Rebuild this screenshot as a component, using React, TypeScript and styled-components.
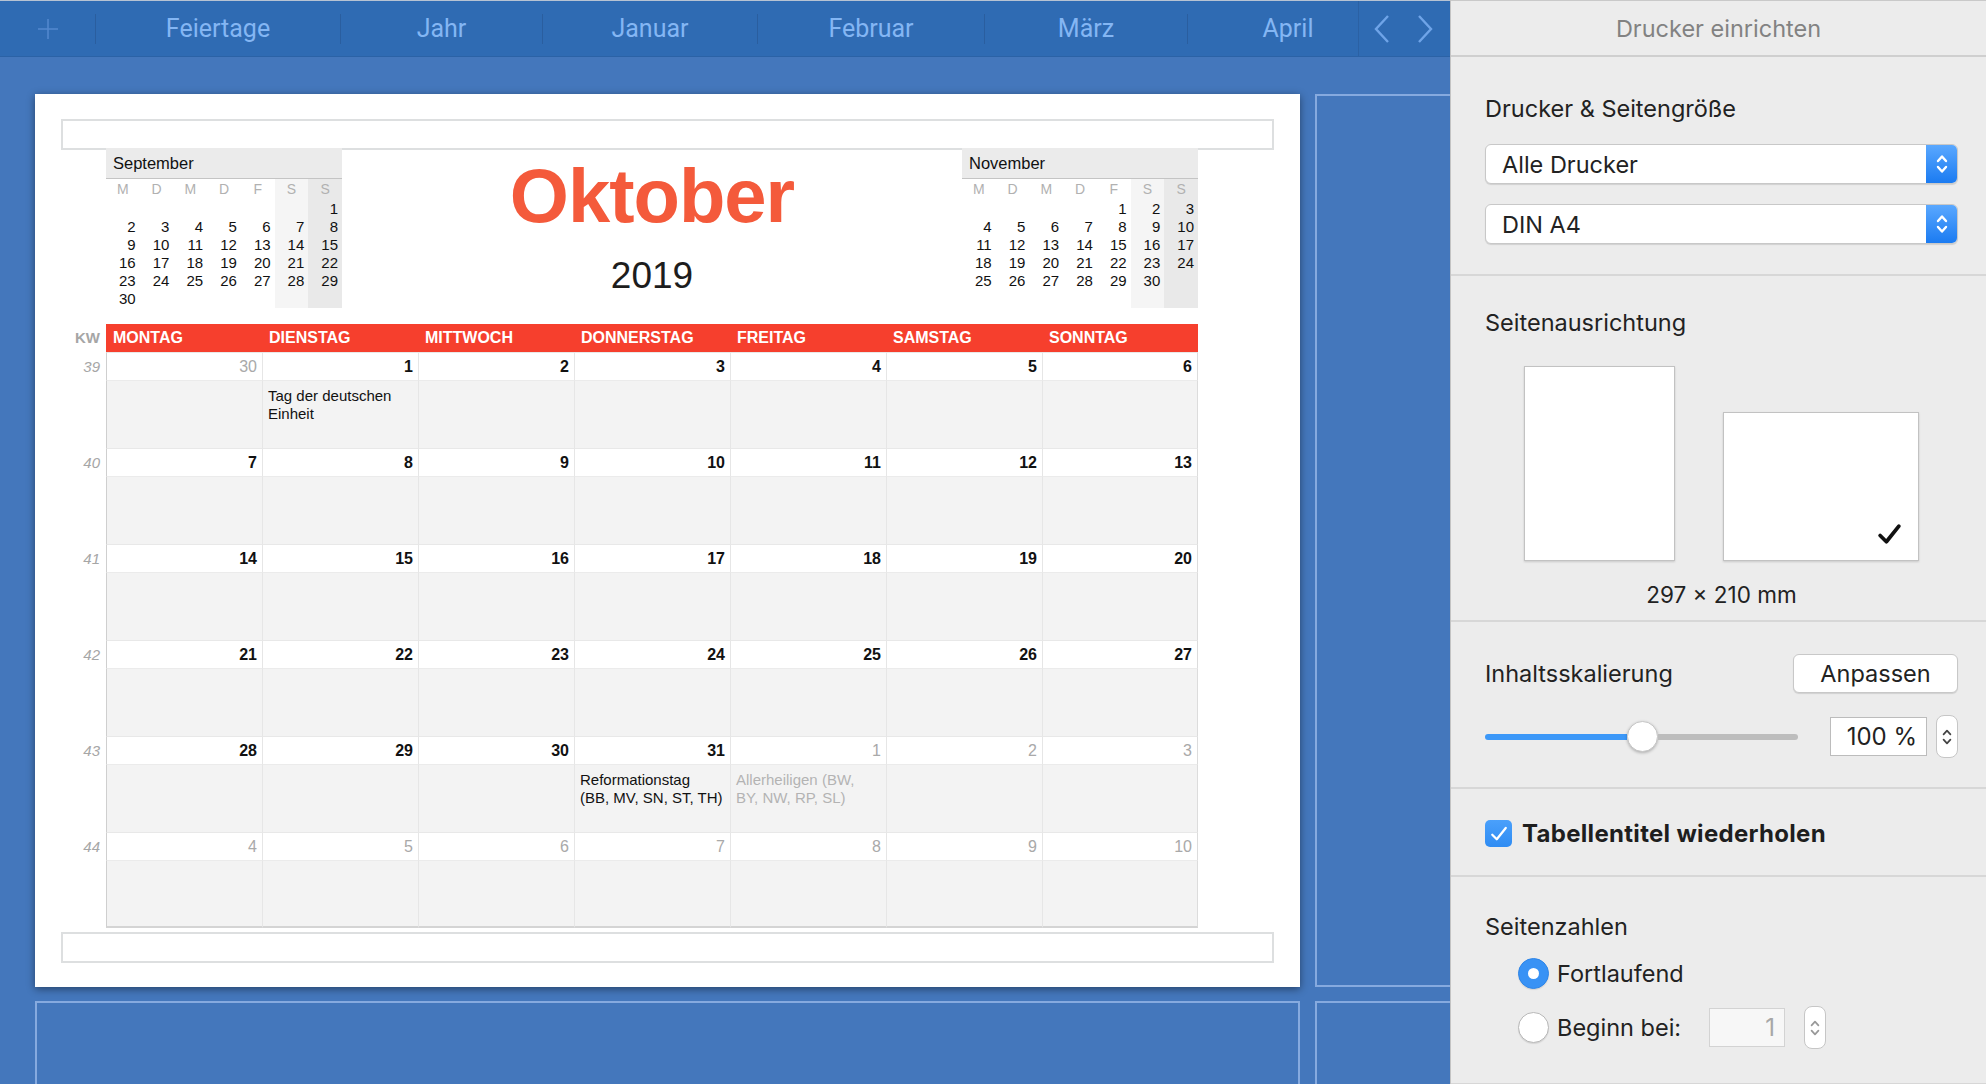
import React from "react";
import styled, { createGlobalStyle } from "styled-components";

const GlobalStyle = createGlobalStyle`
  html, body {
    margin: 0;
    padding: 0;
  }
  body {
    width: 1986px;
    height: 1084px;
    overflow: hidden;
    background: #4477bc;
    font-family: "Liberation Sans", Arial, sans-serif;
  }
  * {
    box-sizing: border-box;
  }
`;

const Shell = styled.div`
  display: flex;
  width: 1986px;
  height: 1084px;
`;

/* ---------- workspace / toolbar ---------- */

const Workspace = styled.div`
  width: 1450px;
  display: flex;
  flex-direction: column;
  overflow: hidden;
`;

const Toolbar = styled.div`
  height: 57px;
  flex: none;
  display: flex;
  background: #2f6bb3;
  border-top: 1px solid #b7c3d3;
  border-bottom: 1px solid #2b62a6;
`;

const TabStrip = styled.div`
  flex: 1;
  display: flex;
  align-items: center;
  overflow: hidden;
`;

const PlusCell = styled.div`
  width: 95px;
  flex: none;
  display: flex;
  justify-content: center;
  align-items: center;
`;

const Tab = styled.div<{ $w: number }>`
  width: ${(p) => p.$w}px;
  flex: none;
  text-align: center;
  font-family: Roboto, "Liberation Sans", sans-serif;
  font-size: 25px;
  color: #84b6f3;
`;

const Divider = styled.div`
  width: 1px;
  height: 30px;
  flex: none;
  background: #2a5e9f;
`;

const NavBox = styled.div`
  width: 92px;
  flex: none;
  display: flex;
  align-items: center;
  justify-content: space-around;
  border-left: 1px solid #2b61a4;
  padding: 0 4px 0 2px;
`;

const Canvas = styled.div`
  flex: 1;
  overflow: hidden;
  background: #4477bc;
  padding: 37px 0 0 35px;
  display: grid;
  grid-template-columns: repeat(2, 1265px);
  grid-auto-rows: 893px;
  gap: 14px 15px;
`;

const Sheet = styled.div`
  background: #fff;
  box-shadow: 0 2px 8px rgba(0, 0, 0, 0.45);
  padding: 25px 26px 24px;
  display: flex;
  flex-direction: column;
`;

const GhostSheet = styled.div`
  border: 2px solid #86aadf;
`;

const MarginBox = styled.div<{ $top?: number }>`
  height: 31px;
  flex: none;
  border: 2px solid #dddfe0;
  margin-top: ${(p) => p.$top ?? 0}px;
`;

/* ---------- calendar ---------- */

const CalendarArea = styled.div`
  width: 1137px;
  margin-top: -2px;
  display: flex;
  flex-direction: column;
`;

const TopBlock = styled.div`
  margin-left: 45px;
  height: 176px;
  display: flex;
  align-items: flex-start;
`;

const MiniCal = styled.div`
  width: 236px;
  flex: none;
`;

const MiniHead = styled.div`
  height: 31px;
  background: #ebebeb;
  border-bottom: 1px solid #c4c4c4;
  padding-left: 7px;
  font-size: 16.5px;
  line-height: 31px;
  color: #111;
`;

const MiniGrid = styled.div`
  display: grid;
  grid-template-columns: repeat(7, 1fr);
  grid-template-rows: 21px repeat(6, 18px);
  background: linear-gradient(
    to right,
    transparent 0,
    transparent 71.43%,
    #f5f5f5 71.43%,
    #f5f5f5 85.71%,
    #e9e9e9 85.71%,
    #e9e9e9 100%
  );
`;

const MiniDow = styled.div`
  text-align: center;
  font-size: 14px;
  line-height: 21px;
  color: #b1b1b1;
`;

const MiniDay = styled.div`
  text-align: right;
  padding-right: 4px;
  font-size: 15px;
  line-height: 18px;
  color: #111;
`;

const TitleBlock = styled.div`
  flex: 1;
  display: flex;
  flex-direction: column;
  align-items: center;
`;

const MonthTitle = styled.div`
  margin-top: 10px;
  font-size: 76px;
  line-height: 76px;
  font-weight: 700;
  letter-spacing: -1px;
  color: #f45a3b;
`;

const YearTitle = styled.div`
  margin-top: 23px;
  font-size: 37px;
  line-height: 37px;
  color: #1d1d1d;
`;

const CalRow = styled.div<{ $head?: boolean }>`
  display: grid;
  grid-template-columns: 45px repeat(7, 156px);
  grid-template-rows: ${(p) => (p.$head ? "28px" : "28px 68px")};
`;

const KwLabel = styled.div<{ $italic?: boolean }>`
  text-align: right;
  padding-right: 6px;
  font-size: 15px;
  line-height: ${(p) => (p.$italic ? "30px" : "28px")};
  color: #a6a6a6;
  font-weight: ${(p) => (p.$italic ? 400 : 700)};
  font-style: ${(p) => (p.$italic ? "italic" : "normal")};
`;

const DayName = styled.div`
  background: #f63f2d;
  color: #fff;
  font-weight: 700;
  font-size: 16px;
  line-height: 28px;
  padding-left: 7px;
`;

const DateCell = styled.div<{ $first?: boolean; $last?: boolean; $muted?: boolean }>`
  background: #fff;
  border-left: 1px solid ${(p) => (p.$first ? "#cfcfcf" : "#e6e6e6")};
  border-right: ${(p) => (p.$last ? "1px solid #dcdcdc" : "none")};
  border-top: 1px solid #e8e8e8;
  text-align: right;
  padding-right: 5px;
  font-size: 16px;
  line-height: 28px;
  font-weight: ${(p) => (p.$muted ? 400 : 700)};
  color: ${(p) => (p.$muted ? "#a9a9a9" : "#111")};
`;

const NoteCell = styled.div<{ $first?: boolean; $last?: boolean; $muted?: boolean; $bottom?: boolean }>`
  background: #f3f3f3;
  border-left: 1px solid ${(p) => (p.$first ? "#cfcfcf" : "#e6e6e6")};
  border-right: ${(p) => (p.$last ? "1px solid #dcdcdc" : "none")};
  border-top: 1px solid #ebebeb;
  border-bottom: ${(p) => (p.$bottom ? "2px solid #d4d4d4" : "none")};
  padding: 6px 0 0 5px;
  font-size: 15px;
  line-height: 18px;
  white-space: nowrap;
  color: ${(p) => (p.$muted ? "#b3b3b3" : "#111")};
`;

/* ---------- sidebar ---------- */

const Sidebar = styled.div`
  width: 536px;
  flex: none;
  background: #ececec;
  border-left: 1px solid #c3c3c3;
  border-top: 1px solid #c9c9c9;
  display: flex;
  flex-direction: column;
  font-family: Inter, "Noto Sans", sans-serif;
  color: #222;
`;

const SideHeader = styled.div`
  height: 56px;
  flex: none;
  display: flex;
  align-items: center;
  justify-content: center;
  font-size: 23.5px;
  color: #828282;
  border-bottom: 2px solid #cfcfcf;
`;

const Section = styled.div<{ $pt: number; $pb: number }>`
  padding: ${(p) => p.$pt}px 28px ${(p) => p.$pb}px 34px;
  border-bottom: 2px solid #d7d7d7;
  display: flex;
  flex-direction: column;
`;

const SectionTitle = styled.div`
  font-size: 23.5px;
  line-height: 28px;
`;

const Select = styled.div<{ $mt: number }>`
  margin-top: ${(p) => p.$mt}px;
  height: 40px;
  background: #fff;
  border: 1px solid #c8c8c8;
  border-radius: 6px;
  box-shadow: 0 1px 1px rgba(0, 0, 0, 0.12);
  display: flex;
  align-items: center;
  padding-left: 16px;
  font-size: 23.5px;
  overflow: hidden;
`;

const SelectStepper = styled.div`
  margin-left: auto;
  width: 31px;
  height: 100%;
  background: linear-gradient(#5aa8ff, #1b7bf1);
  display: flex;
  align-items: center;
  justify-content: center;
`;

const Orientation = styled.div`
  margin-top: 29px;
  display: flex;
  justify-content: center;
  align-items: flex-end;
  gap: 48px;
`;

const Paper = styled.div<{ $w: number; $h: number }>`
  width: ${(p) => p.$w}px;
  height: ${(p) => p.$h}px;
  background: #fff;
  border: 1px solid #c2c2c2;
  box-shadow: 0 1px 2px rgba(0, 0, 0, 0.15);
  display: flex;
  align-items: flex-end;
  justify-content: flex-end;
  padding: 0 16px 13px 0;
`;

const Dims = styled.div`
  margin-top: 20px;
  text-align: center;
  font-size: 22.5px;
  line-height: 28px;
`;

const RowBetween = styled.div`
  display: flex;
  align-items: center;
  justify-content: space-between;
`;

const Button = styled.div`
  width: 165px;
  height: 39px;
  background: #fff;
  border: 1px solid #c8c8c8;
  border-radius: 6px;
  box-shadow: 0 1px 1px rgba(0, 0, 0, 0.12);
  display: flex;
  align-items: center;
  justify-content: center;
  font-size: 23.5px;
`;

const SliderRow = styled.div`
  margin-top: 22px;
  display: flex;
  align-items: center;
`;

const Slider = styled.div`
  width: 313px;
  display: flex;
  align-items: center;
`;

const TrackFill = styled.div`
  width: 142px;
  height: 6px;
  border-radius: 3px 0 0 3px;
  background: #3c98f8;
`;

const TrackRest = styled.div`
  flex: 1;
  height: 6px;
  border-radius: 0 3px 3px 0;
  background: #bdbdbd;
`;

const Knob = styled.div`
  width: 31px;
  height: 31px;
  flex: none;
  border-radius: 50%;
  background: #fff;
  border: 1px solid #c6c6c6;
  box-shadow: 0 1px 3px rgba(0, 0, 0, 0.25);
`;

const NumField = styled.div<{ $w: number; $ml: number; $dim?: boolean }>`
  width: ${(p) => p.$w}px;
  height: 39px;
  margin-left: ${(p) => p.$ml}px;
  background: ${(p) => (p.$dim ? "#f7f7f7" : "#fff")};
  border: 1px solid ${(p) => (p.$dim ? "#d3d3d3" : "#bcbcbc")};
  text-align: right;
  padding-right: 9px;
  font-size: 24px;
  line-height: 37px;
  color: ${(p) => (p.$dim ? "#a7a7a7" : "#222")};
`;

const SmallStepper = styled.div<{ $ml: number }>`
  width: 22px;
  height: 43px;
  margin-left: ${(p) => p.$ml}px;
  background: #fff;
  border: 1px solid #c6c6c6;
  border-radius: 8px;
  display: flex;
  align-items: center;
  justify-content: center;
`;

const CheckRow = styled.div`
  display: flex;
  align-items: center;
  gap: 10px;
  font-size: 24px;
  font-weight: 700;
  letter-spacing: 0.3px;
  color: #1e1e1e;
`;

const CheckBox = styled.div`
  width: 27px;
  height: 27px;
  border-radius: 5px;
  background: linear-gradient(#4aa0fb, #2f8cf3);
  display: flex;
  align-items: center;
  justify-content: center;
`;

const RadioRow = styled.div<{ $mt: number }>`
  margin-top: ${(p) => p.$mt}px;
  padding-left: 33px;
  display: flex;
  align-items: center;
  font-size: 23.5px;
  gap: 8px;
`;

const Radio = styled.div<{ $on?: boolean }>`
  width: 31px;
  height: 31px;
  flex: none;
  border-radius: 50%;
  background: ${(p) => (p.$on ? "#3892f5" : "#fff")};
  border: 1px solid ${(p) => (p.$on ? "#2f86e8" : "#b8b8b8")};
  box-shadow: 0 1px 1px rgba(0, 0, 0, 0.1);
  display: flex;
  align-items: center;
  justify-content: center;
`;

const RadioDot = styled.div`
  width: 11px;
  height: 11px;
  border-radius: 50%;
  background: #fff;
`;

/* ---------- icons ---------- */

const Plus = () => (
  <svg width="22" height="22" viewBox="0 0 22 22">
    <path d="M11 1 V21 M1 11 H21" stroke="#5489cf" strokeWidth="1.5" fill="none" />
  </svg>
);

const Chevron = ({ dir }: { dir: "left" | "right" }) => (
  <svg width="18" height="30" viewBox="0 0 18 30">
    <path
      d={dir === "left" ? "M15 2 L3 15 L15 28" : "M3 2 L15 15 L3 28"}
      stroke="#6fa4e8"
      strokeWidth="2.4"
      fill="none"
    />
  </svg>
);

const UpDown = ({ color, w = 14, h = 26, sw = 2.4 }: { color: string; w?: number; h?: number; sw?: number }) => (
  <svg width={w} height={h} viewBox="0 0 14 26">
    <path
      d="M3 10 L7 5.5 L11 10 M3 16 L7 20.5 L11 16"
      stroke={color}
      strokeWidth={sw}
      fill="none"
      strokeLinecap="round"
      strokeLinejoin="round"
    />
  </svg>
);

const Tick = ({ color, size, sw }: { color: string; size: number; sw: number }) => (
  <svg width={size} height={size} viewBox="0 0 24 24">
    <path d="M3 13 L9 19 L21 4" stroke={color} strokeWidth={sw} fill="none" strokeLinecap="round" strokeLinejoin="round" />
  </svg>
);

/* ---------- data ---------- */

type Day = { n: number; muted?: boolean; note?: string[] };

const dayNames = ["MONTAG", "DIENSTAG", "MITTWOCH", "DONNERSTAG", "FREITAG", "SAMSTAG", "SONNTAG"];
const dow = ["M", "D", "M", "D", "F", "S", "S"];

const range = (from: number, to: number, muted = false): Day[] =>
  Array.from({ length: to - from + 1 }, (_, i) => ({ n: from + i, muted }));

const weeks: { kw: number; days: Day[] }[] = [
  {
    kw: 39,
    days: [
      { n: 30, muted: true },
      { n: 1, note: ["Tag der deutschen", "Einheit"] },
      ...range(2, 6),
    ],
  },
  { kw: 40, days: range(7, 13) },
  { kw: 41, days: range(14, 20) },
  { kw: 42, days: range(21, 27) },
  {
    kw: 43,
    days: [
      ...range(28, 30),
      { n: 31, note: ["Reformationstag", "(BB, MV, SN, ST, TH)"] },
      { n: 1, muted: true, note: ["Allerheiligen (BW,", "BY, NW, RP, SL)"] },
      ...range(2, 3, true),
    ],
  },
  { kw: 44, days: range(4, 10, true) },
];

const pad = (lead: number, last: number): (number | null)[] => {
  const cells: (number | null)[] = [];
  for (let i = 0; i < lead; i++) cells.push(null);
  for (let d = 1; d <= last; d++) cells.push(d);
  while (cells.length < 42) cells.push(null);
  return cells;
};

const september = pad(6, 30);
const november = pad(4, 30);

const tabs = [
  { label: "Feiertage", w: 244 },
  { label: "Jahr", w: 201 },
  { label: "Januar", w: 214 },
  { label: "Februar", w: 226 },
  { label: "März", w: 202 },
  { label: "April", w: 200 },
];

/* ---------- parts ---------- */

function Mini({ title, cells }: { title: string; cells: (number | null)[] }) {
  return (
    <MiniCal>
      <MiniHead>{title}</MiniHead>
      <MiniGrid>
        {dow.map((d, i) => (
          <MiniDow key={"d" + i}>{d}</MiniDow>
        ))}
        {cells.map((c, i) => (
          <MiniDay key={i}>{c ?? ""}</MiniDay>
        ))}
      </MiniGrid>
    </MiniCal>
  );
}

function Calendar() {
  return (
    <CalendarArea>
      <TopBlock>
        <Mini title="September" cells={september} />
        <TitleBlock>
          <MonthTitle>Oktober</MonthTitle>
          <YearTitle>2019</YearTitle>
        </TitleBlock>
        <Mini title="November" cells={november} />
      </TopBlock>
      <CalRow $head>
        <KwLabel>KW</KwLabel>
        {dayNames.map((d) => (
          <DayName key={d}>{d}</DayName>
        ))}
      </CalRow>
      {weeks.map((w, wi) => (
        <CalRow key={w.kw}>
          <KwLabel $italic>{w.kw}</KwLabel>
          {w.days.map((d, i) => (
            <DateCell key={"n" + i} $first={i === 0} $last={i === 6} $muted={d.muted}>
              {d.n}
            </DateCell>
          ))}
          <div />
          {w.days.map((d, i) => (
            <NoteCell
              key={"t" + i}
              $first={i === 0}
              $last={i === 6}
              $muted={d.muted}
              $bottom={wi === weeks.length - 1}
            >
              {d.note?.map((line) => (
                <div key={line}>{line}</div>
              ))}
            </NoteCell>
          ))}
        </CalRow>
      ))}
    </CalendarArea>
  );
}

export default function App() {
  return (
    <>
      <GlobalStyle />
      <Shell>
        <Workspace>
          <Toolbar>
            <TabStrip>
              <PlusCell>
                <Plus />
              </PlusCell>
              {tabs.map((t) => (
                <React.Fragment key={t.label}>
                  <Divider />
                  <Tab $w={t.w}>{t.label}</Tab>
                </React.Fragment>
              ))}
            </TabStrip>
            <NavBox>
              <Chevron dir="left" />
              <Chevron dir="right" />
            </NavBox>
          </Toolbar>
          <Canvas>
            <Sheet>
              <MarginBox />
              <Calendar />
              <MarginBox $top={4} />
            </Sheet>
            <GhostSheet />
            <GhostSheet />
            <GhostSheet />
          </Canvas>
        </Workspace>

        <Sidebar>
          <SideHeader>Drucker einrichten</SideHeader>

          <Section $pt={38} $pb={30}>
            <SectionTitle>Drucker &amp; Seitengröße</SectionTitle>
            <Select $mt={21}>
              Alle Drucker
              <SelectStepper>
                <UpDown color="#fff" />
              </SelectStepper>
            </Select>
            <Select $mt={20}>
              DIN A4
              <SelectStepper>
                <UpDown color="#fff" />
              </SelectStepper>
            </Select>
          </Section>

          <Section $pt={33} $pb={11}>
            <SectionTitle>Seitenausrichtung</SectionTitle>
            <Orientation>
              <Paper $w={151} $h={195} />
              <Paper $w={196} $h={149}>
                <Tick color="#111" size={25} sw={3.6} />
              </Paper>
            </Orientation>
            <Dims>297 × 210 mm</Dims>
          </Section>

          <Section $pt={32} $pb={29}>
            <RowBetween>
              <SectionTitle>Inhaltsskalierung</SectionTitle>
              <Button>Anpassen</Button>
            </RowBetween>
            <SliderRow>
              <Slider>
                <TrackFill />
                <Knob />
                <TrackRest />
              </Slider>
              <NumField $w={97} $ml={32}>
                100 %
              </NumField>
              <SmallStepper $ml={9}>
                <UpDown color="#444" w={12} h={30} sw={2} />
              </SmallStepper>
            </SliderRow>
          </Section>

          <Section $pt={30} $pb={27}>
            <CheckRow>
              <CheckBox>
                <Tick color="#fff" size={18} sw={3} />
              </CheckBox>
              Tabellentitel wiederholen
            </CheckRow>
          </Section>

          <Section $pt={36} $pb={34}>
            <SectionTitle>Seitenzahlen</SectionTitle>
            <RadioRow $mt={17}>
              <Radio $on>
                <RadioDot />
              </Radio>
              Fortlaufend
            </RadioRow>
            <RadioRow $mt={17}>
              <Radio />
              Beginn bei:
              <NumField $w={76} $ml={20} $dim>
                1
              </NumField>
              <SmallStepper $ml={11}>
                <UpDown color="#999" w={12} h={30} sw={2} />
              </SmallStepper>
            </RadioRow>
          </Section>
        </Sidebar>
      </Shell>
    </>
  );
}
